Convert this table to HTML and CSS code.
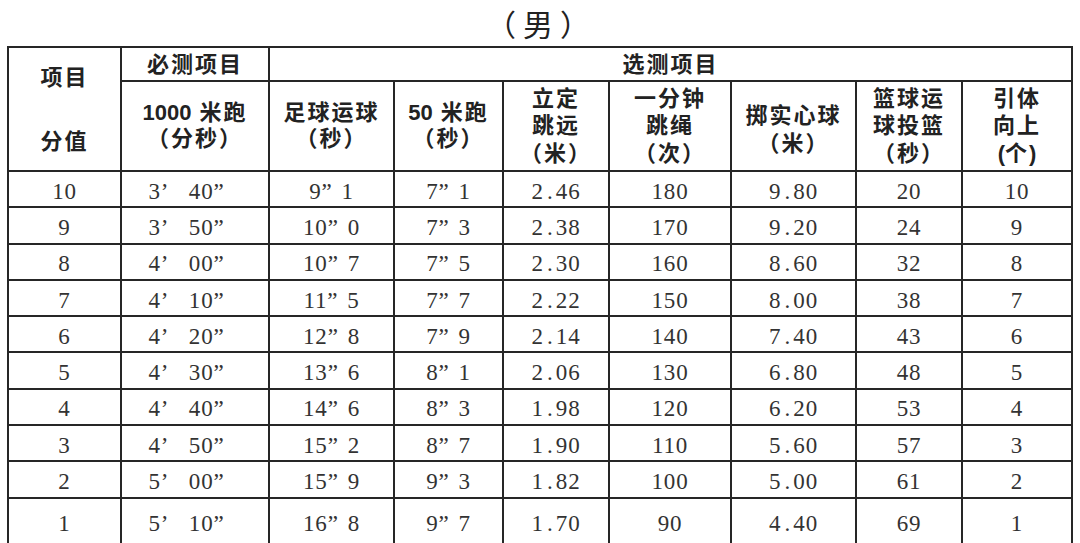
FILE: index.html
```html
<!DOCTYPE html>
<html lang="zh-CN">
<head>
<meta charset="utf-8">
<title>（男）</title>
<link rel="stylesheet" href="styles.css">
</head>
<body>
<div class="page">
  <h1 class="title">（男）</h1>
  <table class="score">
    <colgroup>
      <col class="c1"><col class="c2"><col class="c3"><col class="c4"><col class="c5"><col class="c6"><col class="c7"><col class="c8"><col class="c9">
    </colgroup>
    <thead>
      <tr class="hr1">
        <th rowspan="2" class="corner"><div class="cl">项目</div><div class="cl low">分值</div></th>
        <th>必测项目</th>
        <th colspan="7" class="opt">选测项目</th>
      </tr>
      <tr class="hr2">
        <th><span class="n">1000</span> 米跑<br>（分秒）</th>
        <th>足球运球<br>（秒）</th>
        <th><span class="n">50</span> 米跑<br>（秒）</th>
        <th class="t3">立定<br>跳远<br>（米）</th>
        <th class="t3">一分钟<br>跳绳<br>（次）</th>
        <th class="t2b">掷实心球<br>（米）</th>
        <th class="t3">篮球运<br>球投篮<br>（秒）</th>
        <th class="t3">引体<br>向上<br><span class="n">(</span>个<span class="n">)</span></th>
      </tr>
    </thead>
    <tbody>
      <tr><td>10</td><td>3<span class="q w">’</span>40<span class="q e">”</span></td><td>9<span class="q">”</span>1</td><td>7<span class="q">”</span>1</td><td>2<span class="d">.</span>46</td><td>180</td><td>9<span class="d">.</span>80</td><td>20</td><td>10</td></tr>
      <tr><td>9</td><td>3<span class="q w">’</span>50<span class="q e">”</span></td><td>10<span class="q">”</span>0</td><td>7<span class="q">”</span>3</td><td>2<span class="d">.</span>38</td><td>170</td><td>9<span class="d">.</span>20</td><td>24</td><td>9</td></tr>
      <tr><td>8</td><td>4<span class="q w">’</span>00<span class="q e">”</span></td><td>10<span class="q">”</span>7</td><td>7<span class="q">”</span>5</td><td>2<span class="d">.</span>30</td><td>160</td><td>8<span class="d">.</span>60</td><td>32</td><td>8</td></tr>
      <tr><td>7</td><td>4<span class="q w">’</span>10<span class="q e">”</span></td><td>11<span class="q">”</span>5</td><td>7<span class="q">”</span>7</td><td>2<span class="d">.</span>22</td><td>150</td><td>8<span class="d">.</span>00</td><td>38</td><td>7</td></tr>
      <tr><td>6</td><td>4<span class="q w">’</span>20<span class="q e">”</span></td><td>12<span class="q">”</span>8</td><td>7<span class="q">”</span>9</td><td>2<span class="d">.</span>14</td><td>140</td><td>7<span class="d">.</span>40</td><td>43</td><td>6</td></tr>
      <tr><td>5</td><td>4<span class="q w">’</span>30<span class="q e">”</span></td><td>13<span class="q">”</span>6</td><td>8<span class="q">”</span>1</td><td>2<span class="d">.</span>06</td><td>130</td><td>6<span class="d">.</span>80</td><td>48</td><td>5</td></tr>
      <tr><td>4</td><td>4<span class="q w">’</span>40<span class="q e">”</span></td><td>14<span class="q">”</span>6</td><td>8<span class="q">”</span>3</td><td>1<span class="d">.</span>98</td><td>120</td><td>6<span class="d">.</span>20</td><td>53</td><td>4</td></tr>
      <tr><td>3</td><td>4<span class="q w">’</span>50<span class="q e">”</span></td><td>15<span class="q">”</span>2</td><td>8<span class="q">”</span>7</td><td>1<span class="d">.</span>90</td><td>110</td><td>5<span class="d">.</span>60</td><td>57</td><td>3</td></tr>
      <tr><td>2</td><td>5<span class="q w">’</span>00<span class="q e">”</span></td><td>15<span class="q">”</span>9</td><td>9<span class="q">”</span>3</td><td>1<span class="d">.</span>82</td><td>100</td><td>5<span class="d">.</span>00</td><td>61</td><td>2</td></tr>
      <tr class="last"><td>1</td><td>5<span class="q w">’</span>10<span class="q e">”</span></td><td>16<span class="q">”</span>8</td><td>9<span class="q">”</span>7</td><td>1<span class="d">.</span>70</td><td>90</td><td>4<span class="d">.</span>40</td><td>69</td><td>1</td></tr>
    </tbody>
  </table>
</div>
</body>
</html>
```

FILE: styles.css
```css
html, body {
  margin: 0;
  padding: 0;
  background: #ffffff;
}

body {
  width: 1080px;
  height: 543px;
  overflow: hidden;
  font-family: "Liberation Serif", "Noto Sans CJK SC", serif;
  color: #333333;
}

.page {
  padding-left: 7px;
}

.title {
  margin: 0;
  width: 1066px;
  height: 46px;
  text-align: center;
  font-family: "Noto Sans CJK SC", sans-serif;
  font-weight: 400;
  font-size: 30px;
  line-height: 46px;
  letter-spacing: 7px;
  text-indent: 3px;
  color: #222222;
}

.score {
  border-collapse: separate;
  border-spacing: 0;
  table-layout: fixed;
  width: 1066px;
  border-left: 2px solid #262626;
  border-top: 2px solid #262626;
}

.score th,
.score td {
  border-right: 2px solid #262626;
  border-bottom: 2px solid #262626;
  padding: 0;
  text-align: center;
  vertical-align: middle;
}

.c1 { width: 113px; }
.c2 { width: 148px; }
.c3 { width: 125px; }
.c4 { width: 109px; }
.c5 { width: 106px; }
.c6 { width: 122px; }
.c7 { width: 125px; }
.c8 { width: 106px; }
.c9 { width: 110px; }

.score th {
  font-family: "Liberation Sans", "Noto Sans CJK SC", sans-serif;
  font-weight: 700;
  font-size: 22px;
  letter-spacing: 2px;
  line-height: 26px;
  color: #222222;
}

.hr1 { height: 34px; }
.hr2 { height: 90px; }

.hr1 th {
  padding-top: 1px;
}

.opt {
  padding-top: 4px;
}

.corner .cl {
  line-height: 26px;
}

.corner .low {
  margin-top: 38px;
}

.score th.t3 {
  line-height: 27.5px;
}

.score th.t2b {
  line-height: 28px;
  padding-top: 8px;
}

.n {
  font-family: "Liberation Sans", sans-serif;
  letter-spacing: 0;
}

.score tbody tr {
  height: 36.3px;
}

.score tbody tr.last {
  height: 48px;
}

.score td {
  font-size: 23px;
  letter-spacing: 0.8px;
  line-height: 24px;
  padding-top: 5px;
  color: #333333;
}

.q {
  display: inline-block;
  width: 20px;
  text-align: left;
  letter-spacing: 0;
}

.q.w {
  width: 28px;
}

.q.e {
  width: 28px;
}

.d {
  display: inline-block;
  width: 12px;
  text-align: center;
  letter-spacing: 0;
}
```
